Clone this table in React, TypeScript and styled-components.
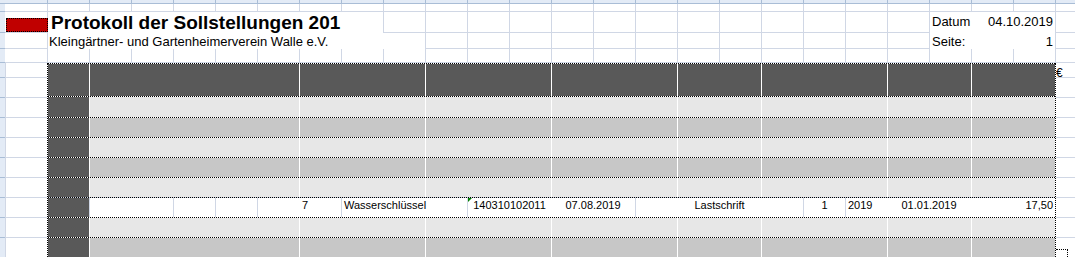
import React from "react";
import styled, { createGlobalStyle } from "styled-components";

const GRID = "#d0d7e5";
const HEAD_BG = "#e3ebf6";
const HEAD_LINE = "#a9bdd6";
const DARK = "#595959";
const LIGHT = "#e7e7e7";
const MID = "#c7c7c7";

const GlobalStyle = createGlobalStyle`
  html, body { margin: 0; padding: 0; background: #fff; }
  body { font-family: "Liberation Sans", Arial, sans-serif; color: #000; }
  * { box-sizing: border-box; }
`;

const Sheet = styled.div`
  width: 1075px;
  height: 257px;
  overflow: hidden;
  display: flex;
  flex-direction: column;
  background: #fff;
`;

const ColumnHeaderBar = styled.div`
  height: 4px;
  flex: none;
  border-bottom: 1px solid ${HEAD_LINE};
  background-color: ${HEAD_BG};
  background-image: repeating-linear-gradient(to right, transparent 0 41px, ${HEAD_LINE} 41px 42px);
  background-position: 6px 0;
`;

const SheetRow = styled.div<{ $h: number }>`
  display: flex;
  flex: none;
  height: ${(p) => p.$h}px;
`;

const RowHead = styled.div`
  width: 5px;
  flex: none;
  background: ${HEAD_BG};
  border-bottom: 1px solid ${HEAD_LINE};
`;

const RowCells = styled.div<{ $cols: string }>`
  flex: 1;
  display: grid;
  grid-template-columns: ${(p) => p.$cols};
  border-bottom: 1px solid ${GRID};
  background-image: repeating-linear-gradient(to right, transparent 0 41px, ${GRID} 41px 42px);
  background-position: 1px 0;
`;

const MarkerCell = styled.div`
  padding: 6px 0 0 1px;
`;

const RedMarker = styled.div`
  width: 42px;
  height: 14px;
  background: #c00000;
  border: 1px dotted #000;
`;

const WhiteCell = styled.div<{ $pt?: number; $pl?: number }>`
  background: #fff;
  padding-top: ${(p) => p.$pt ?? 0}px;
  padding-left: ${(p) => p.$pl ?? 0}px;
  white-space: nowrap;
`;

const TitleText = styled.div`
  white-space: nowrap;
  font-size: 19px;
  line-height: 21px;
  font-weight: bold;
`;

const SubtitleText = styled.div`
  font-size: 13px;
  line-height: 15px;
`;

const InfoCell = styled.div<{ $pt: number }>`
  background: #fff;
  display: flex;
  justify-content: space-between;
  padding: ${(p) => p.$pt}px 2px 0 2px;
  font-size: 13px;
  line-height: 15px;
  white-space: nowrap;
`;

const LowerArea = styled.div`
  flex: 1;
  min-height: 0;
  display: flex;
  background-image: repeating-linear-gradient(to bottom, transparent 0 19px, ${GRID} 19px 20px);
  background-position: 0 -5px;
`;

const RowHeadStrip = styled.div`
  width: 5px;
  flex: none;
  background-color: ${HEAD_BG};
  background-image: repeating-linear-gradient(to bottom, transparent 0 19px, ${HEAD_LINE} 19px 20px);
  background-position: 0 -5px;
`;

const ColAStrip = styled.div`
  width: 42px;
  flex: none;
  border-left: 1px solid ${GRID};
`;

const Table = styled.div`
  width: 1009px;
  flex: none;
  align-self: flex-start;
  border-left: 1px dotted #000;
  border-right: 1px dotted #000;
  background: #fff;
`;

const BAND_COLS = "41px 209px 125px 125px 125px 83px 125px 83px 83px";
const DATA_COLS = "41px 83px 41px 41px 83px 125px 167px 167px 41px 209px";

const TRow = styled.div<{ $h: number; $cols: string; $gap: string }>`
  display: grid;
  grid-template-columns: ${(p) => p.$cols};
  column-gap: 1px;
  height: ${(p) => p.$h}px;
  border-top: 1px dotted #000;
  background: ${(p) => p.$gap};
  font-size: 11px;
  line-height: 15px;
  white-space: nowrap;
`;

const TCell = styled.div<{ $bg: string; $align?: string; $pl?: number; $pr?: number }>`
  position: relative;
  background: ${(p) => p.$bg};
  text-align: ${(p) => p.$align ?? "left"};
  padding-left: ${(p) => p.$pl ?? 0}px;
  padding-right: ${(p) => p.$pr ?? 0}px;
  overflow: hidden;
`;

const SplitCell = styled.div<{ $cols: string }>`
  position: relative;
  background: #fff;
  display: grid;
  grid-template-columns: ${(p) => p.$cols};
`;

const Part = styled.div<{ $align: string; $pl?: number; $pr?: number }>`
  text-align: ${(p) => p.$align};
  padding-left: ${(p) => p.$pl ?? 0}px;
  padding-right: ${(p) => p.$pr ?? 0}px;
`;

const ErrorMark = styled.div`
  position: absolute;
  left: 0;
  top: 0;
  width: 0;
  height: 0;
  border-top: 4px solid #008000;
  border-right: 4px solid transparent;
`;

const RightMargin = styled.div`
  flex: 1;
  display: flex;
  flex-direction: column;
  overflow: hidden;
`;

const Euro = styled.div`
  margin: 3px 0 0 0;
  font-size: 12px;
  line-height: 14px;
`;

const DottedStub = styled.div`
  margin-top: auto;
  width: 12px;
  height: 8px;
  border-top: 1px dotted #000;
  border-right: 1px dotted #000;
`;

type Kind = "light" | "mid" | "data";
const bodyRows: Kind[] = ["light", "mid", "light", "mid", "light", "data", "light", "mid", "light"];

function BandRow({ h, color }: { h: number; color: string }) {
  return (
    <TRow $h={h} $cols={BAND_COLS} $gap="#fff">
      <TCell $bg={DARK} />
      {Array.from({ length: 8 }).map((_, i) => (
        <TCell key={i} $bg={color} />
      ))}
    </TRow>
  );
}

function DataRow() {
  return (
    <TRow $h={20} $cols={DATA_COLS} $gap={GRID}>
      <TCell $bg={DARK} />
      <TCell $bg="#fff" />
      <TCell $bg="#fff" />
      <TCell $bg="#fff" />
      <TCell $bg="#fff" $pl={44}>7</TCell>
      <TCell $bg="#fff" $pl={2}>Wasserschlüssel</TCell>
      <SplitCell $cols="83px 84px">
        <ErrorMark />
        <Part $align="center">140310102011</Part>
        <Part $align="center">07.08.2019</Part>
      </SplitCell>
      <TCell $bg="#fff" $align="center">Lastschrift</TCell>
      <TCell $bg="#fff" $align="center">1</TCell>
      <SplitCell $cols="41px 84px 84px">
        <Part $align="left" $pl={2}>2019</Part>
        <Part $align="center">01.01.2019</Part>
        <Part $align="right" $pr={2}>17,50</Part>
      </SplitCell>
    </TRow>
  );
}

export default function App() {
  return (
    <>
      <GlobalStyle />
      <Sheet>
        <ColumnHeaderBar />
        <SheetRow $h={8}>
          <RowHead />
          <RowCells $cols="1fr" />
        </SheetRow>
        <SheetRow $h={21}>
          <RowHead />
          <RowCells $cols="43px 335px 547px 125px 1fr">
            <MarkerCell>
              <RedMarker />
            </MarkerCell>
            <WhiteCell $pt={0} $pl={3}>
              <TitleText>Protokoll der Sollstellungen 201</TitleText>
            </WhiteCell>
            <div />
            <InfoCell $pt={2}>
              <span>Datum</span>
              <span>04.10.2019</span>
            </InfoCell>
          </RowCells>
        </SheetRow>
        <SheetRow $h={16}>
          <RowHead />
          <RowCells $cols="43px 377px 505px 125px 1fr">
            <div />
            <WhiteCell $pt={1} $pl={1}>
              <SubtitleText>Kleingärtner- und Gartenheimerverein Walle e.V.</SubtitleText>
            </WhiteCell>
            <div />
            <InfoCell $pt={1}>
              <span>Seite:</span>
              <span>1</span>
            </InfoCell>
          </RowCells>
        </SheetRow>
        <SheetRow $h={14}>
          <RowHead />
          <RowCells $cols="1fr" />
        </SheetRow>
        <LowerArea>
          <RowHeadStrip />
          <ColAStrip />
          <Table>
            <BandRow h={33} color={DARK} />
            {bodyRows.map((kind, i) =>
              kind === "data" ? (
                <DataRow key={i} />
              ) : (
                <BandRow key={i} h={i === 0 ? 21 : 20} color={kind === "light" ? LIGHT : MID} />
              )
            )}
          </Table>
          <RightMargin>
            <Euro>€</Euro>
            <DottedStub />
          </RightMargin>
        </LowerArea>
      </Sheet>
    </>
  );
}
